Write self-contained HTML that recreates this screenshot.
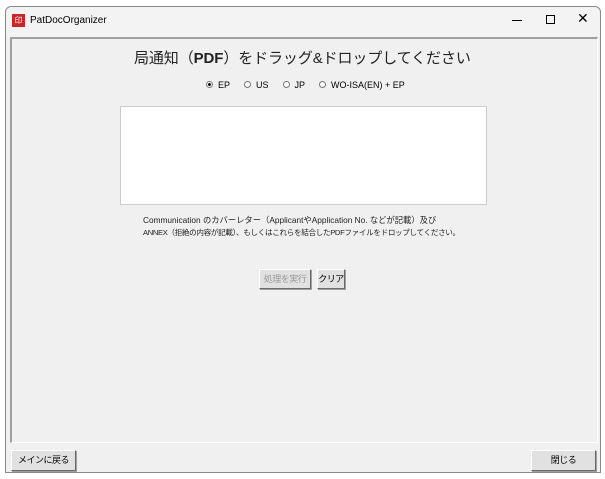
<!DOCTYPE html>
<html><head><meta charset="utf-8"><style>
*{margin:0;padding:0;box-sizing:border-box}
body{width:605px;height:479px;background:#fff;position:relative;overflow:hidden;font-family:"Liberation Sans","Noto Sans CJK JP",sans-serif;color:#000}
.win{position:absolute;left:5px;top:6px;width:596px;height:467px;background:#f0f0f0;border:1px solid #888;border-radius:6px 6px 0 0}
.title{position:absolute;left:0;top:0;width:100%;height:30px;background:#f3f3f3;border-radius:6px 6px 0 0}
.abs{position:absolute;white-space:nowrap}
.panel{position:absolute;left:4px;top:30px;width:588px;height:406px;border-top:2px solid #a0a0a0;border-left:2px solid #a0a0a0;border-right:1px solid #fff;border-bottom:1px solid #fff;background:#f0f0f0}
.btn{position:absolute;background:#e1e1e1;border:1px solid #fff;border-right-color:#696969;border-bottom-color:#696969;box-shadow:1px 1px 0 #a0a0a0;font-size:9px;text-align:center;white-space:nowrap;letter-spacing:-0.5px}
.radio{display:inline-block;width:7px;height:7px;border:1px solid #777;border-radius:50%;vertical-align:middle;margin-right:5px;position:relative;top:-1px;background:#fff}
</style></head><body>
<div class="win">
 <div class="title">
  <div class="abs" style="left:6px;top:7px;width:13px;height:13px;background:#c62828;color:#fff;font-size:8px;line-height:13px;text-align:center">印</div>
  <div class="abs" style="left:24px;top:8px;font-size:10px">PatDocOrganizer</div>
  <div class="abs" style="left:506px;top:13px;width:10px;height:1px;background:#000"></div>
  <div class="abs" style="left:540px;top:8px;width:9px;height:9px;border:1px solid #000"></div>
  <div class="abs" style="left:571px;top:3px;font-size:14px">✕</div>
 </div>
 <div class="panel"></div>
 <div class="abs" style="left:128px;top:40px;font-size:15px;letter-spacing:-0.1px;color:#222">局通知（<b>PDF</b>）をドラッグ&amp;ドロップしてください</div>
 <div class="abs" style="left:200px;top:73px;font-size:9px"><span class="radio" style="background:radial-gradient(#000 1.3px,#fff 1.6px)"></span>EP<span style="margin-left:14px" class="radio"></span>US<span style="margin-left:14px" class="radio"></span>JP<span style="margin-left:14px" class="radio"></span>WO-ISA(EN) + EP</div>
 <div class="abs" style="left:114px;top:99px;width:367px;height:99px;background:#fff;border:1px solid #ccc"></div>
 <div class="abs" style="left:137px;top:208px;font-size:8.3px;line-height:11px;color:#222">Communication のカバーレター（ApplicantやApplication No. などが記載）及び</div>
 <div class="abs" style="left:137px;top:220px;font-size:7.6px;line-height:11px;color:#222;letter-spacing:-0.35px">ANNEX（拒絶の内容が記載）、もしくはこれらを結合したPDFファイルをドロップしてください。</div>
 <div class="btn" style="left:253px;top:262px;width:52px;height:20px;line-height:18px;color:#999">処理を実行</div>
 <div class="btn" style="left:311px;top:262px;width:28px;height:20px;line-height:18px">クリア</div>
 <div class="btn" style="left:5px;top:443px;width:65px;height:21px;line-height:19px">メインに戻る</div>
 <div class="btn" style="left:525px;top:443px;width:65px;height:21px;line-height:19px">閉じる</div>
</div>
</body></html>
